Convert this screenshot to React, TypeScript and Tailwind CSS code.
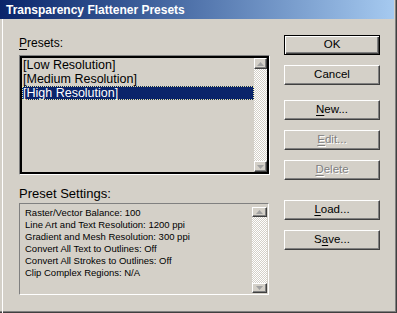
const checker =
  "bg-[repeating-conic-gradient(#ffffff_0_25%,#d4d0c8_0_50%)] bg-[length:2px_2px]";

const raised =
  "bg-[#d4d0c8] border-t border-l border-t-white border-l-white border-b border-r border-b-[#404040] border-r-[#404040] shadow-[inset_-1px_-1px_#808080]";

function Arrow({ up }: { up?: boolean }) {
  return (
    <svg width="7" height="4" viewBox="0 0 7 4">
      {up ? (
        <polygon points="3.5,0 7,4 0,4" fill="#a0a0a0" />
      ) : (
        <polygon points="0,0 7,0 3.5,4" fill="#a0a0a0" />
      )}
    </svg>
  );
}

function ScrollBtn({ up, h }: { up?: boolean; h: string }) {
  return (
    <div className={`${raised} ${h} w-full flex items-center justify-center`}>
      <Arrow up={up} />
    </div>
  );
}

// Win classic button, underline index optional
function Btn({
  label,
  u,
  disabled,
  def,
  className,
}: {
  label: string;
  u?: number;
  disabled?: boolean;
  def?: boolean;
  className?: string;
}) {
  const text =
    u === undefined ? (
      label
    ) : (
      <>
        {label.slice(0, u)}
        <span className="underline underline-offset-2">{label[u]}</span>
        {label.slice(u + 1)}
      </>
    );
  return (
    <div
      className={`w-[96px] h-[20px] flex items-center justify-center text-[11.5px] ${
        def
          ? "border border-black bg-[#d4d0c8] shadow-[inset_1px_1px_#ffffff,inset_-1px_-1px_#404040,inset_-2px_-2px_#808080]"
          : raised
      } ${
        disabled
          ? "text-[#808080] [text-shadow:1px_1px_0_#ffffff]"
          : "text-black"
      } ${className ?? ""}`}
    >
      {text}
    </div>
  );
}

export default function App() {
  const presets = ["[Low Resolution]", "[Medium Resolution]", "[High Resolution]"];
  const settings = [
    "Raster/Vector Balance: 100",
    "Line Art and Text Resolution: 1200 ppi",
    "Gradient and Mesh Resolution: 300 ppi",
    "Convert All Text to Outlines: Off",
    "Convert All Strokes to Outlines: Off",
    "Clip Complex Regions: N/A",
  ];

  return (
    <div
      className="w-[397px] h-[313px] bg-[#d4d0c8] flex flex-col overflow-hidden shadow-[inset_-1px_-1px_#404040,inset_-2px_-2px_#808080]"
      style={{ fontFamily: '"Liberation Sans", Arial, sans-serif' }}
    >
      {/* title bar */}
      <div className="h-[19px] w-[394px] shrink-0 bg-gradient-to-r from-[#0a246a] to-[#a6caf0] text-white font-bold text-[12px] pl-[6px] flex items-center">
        Transparency Flattener Presets
      </div>

      <div className="flex flex-1 border-l border-l-white ml-[2px]">
        {/* left column */}
        <div className="flex flex-col pl-[16px] w-[267px]">
          <div className="mt-[17px] h-[14px] leading-[14px] text-[12px] text-black">
            <span className="underline underline-offset-2">P</span>resets:
          </div>
          <div className="mt-[5px] h-[120px] w-[251px] flex border-t border-l border-t-[#808080] border-l-[#808080] border-b border-r border-b-white border-r-white">
            <div className="flex flex-1 border-2 border-black bg-[#d4d0c8]">
              <div className="flex-1 flex flex-col">
                {presets.map((p, i) => (
                  <div
                    key={p}
                    className={`h-[14px] leading-[14px] pl-[1px] text-[12.5px] ${
                      i === 2
                        ? "bg-[#0a246a] text-white outline-1 outline-dotted outline-[#e8e4a0] -outline-offset-1"
                        : "text-black"
                    }`}
                  >
                    {p}
                  </div>
                ))}
              </div>
              <div className={`w-[13px] flex flex-col justify-between ${checker}`}>
                <ScrollBtn up h="h-[11px]" />
                <ScrollBtn h="h-[11px]" />
              </div>
            </div>
          </div>

          <div className="mt-[12px] h-[14px] leading-[14px] text-[13px] text-black">
            Preset Settings:
          </div>
          <div className="mt-[2px] h-[92px] w-[250px] flex border-t border-l border-t-[#808080] border-l-[#808080] border-b border-r border-b-white border-r-white">
            <div className="flex-1 pt-[3px] pl-[5px] text-[9.5px] leading-[12px] text-black">
              {settings.map((s) => (
                <div key={s}>{s}</div>
              ))}
            </div>
            <div className={`w-[15px] mt-[3px] mb-[1px] mr-[1px] flex flex-col justify-between ${checker}`}>
              <ScrollBtn up h="h-[10px]" />
              <ScrollBtn h="h-[10px]" />
            </div>
          </div>
        </div>

        {/* right column */}
        <div className="flex flex-col ml-[14px] pt-[16px]">
          <Btn label="OK" def />
          <Btn label="Cancel" className="mt-[10px]" />
          <Btn label="New..." u={0} className="mt-[15px]" />
          <Btn label="Edit..." u={0} disabled className="mt-[10px]" />
          <Btn label="Delete" u={0} disabled className="mt-[10px]" />
          <Btn label="Load..." u={0} className="mt-[20px]" />
          <Btn label="Save..." u={1} className="mt-[10px]" />
        </div>
      </div>
    </div>
  );
}
